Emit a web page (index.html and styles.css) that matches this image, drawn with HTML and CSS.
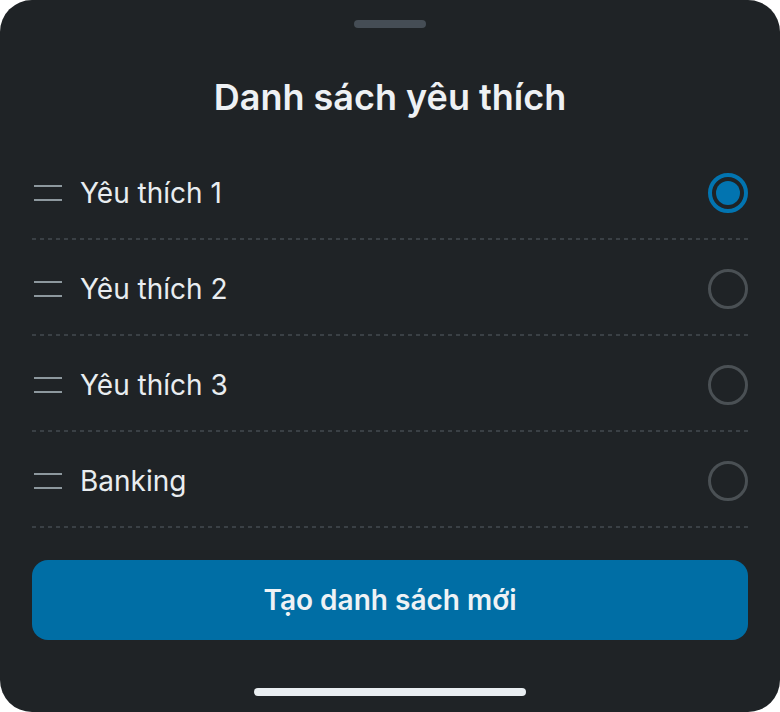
FILE: index.html
```
<!DOCTYPE html>
<html lang="vi">
<head>
<meta charset="utf-8">
<link rel="stylesheet" href="styles.css">
</head>
<body>
<div class="sheet">
  <div class="grabber"></div>
  <h1 class="title">Danh sách yêu thích</h1>
  <ul class="list">
    <li class="row">
      <span class="handle"></span>
      <span class="label">Yêu thích 1</span>
      <span class="radio checked"></span>
    </li>
    <li class="row">
      <span class="handle"></span>
      <span class="label">Yêu thích 2</span>
      <span class="radio"></span>
    </li>
    <li class="row">
      <span class="handle"></span>
      <span class="label">Yêu thích 3</span>
      <span class="radio"></span>
    </li>
    <li class="row">
      <span class="handle"></span>
      <span class="label">Banking</span>
      <span class="radio"></span>
    </li>
  </ul>
  <button class="primary">Tạo danh sách mới</button>
  <div class="home"></div>
</div>
</body>
</html>
```
FILE: styles.css
```
* { box-sizing: border-box; }
html, body { margin: 0; padding: 0; background: #ffffff; }
body { font-family: Inter, "Noto Sans", sans-serif; }
.sheet {
  width: 780px;
  height: 712px;
  background: #1f2326;
  border-radius: 32px;
  padding: 20px 32px 0;
  display: flex;
  flex-direction: column;
  align-items: stretch;
}
.grabber {
  align-self: center;
  width: 72px;
  height: 8px;
  border-radius: 4px;
  background: #454d55;
}
.title {
  margin: 47px 0 0;
  height: 44px;
  line-height: 44px;
  text-align: center;
  color: #eef1f4;
  font-size: 36px;
  font-weight: 600;
  letter-spacing: 0;
}
.list {
  list-style: none;
  margin: 25px 0 0;
  padding: 0;
}
.row {
  height: 96px;
  display: flex;
  align-items: center;
  padding-top: 2px;
  background-image: linear-gradient(to right, #3a4045 50%, transparent 50%);
  background-size: 8px 2px;
  background-repeat: repeat-x;
  background-position: left bottom;
}
.handle {
  width: 28px;
  height: 16px;
  border-top: 2px solid #8d989e;
  border-bottom: 2px solid #8d989e;
  margin: 0 18px 0 2px;
  flex: none;
}
.label {
  flex: 1;
  color: #e9edf0;
  font-size: 28px;
  font-weight: 400;
}
.radio {
  width: 40px;
  height: 40px;
  border-radius: 50%;
  border: 3px solid #4a5054;
  flex: none;
  display: flex;
  align-items: center;
  justify-content: center;
}
.radio.checked { border: 4px solid #0274b0; }
.radio.checked::after {
  content: "";
  width: 24px;
  height: 24px;
  border-radius: 50%;
  background: #0274b0;
}
.primary {
  margin-top: 32px;
  height: 80px;
  border: 0;
  border-radius: 16px;
  background: #006ea5;
  color: #eef2f5;
  font-family: Inter, "Noto Sans", sans-serif;
  font-size: 28px;
  font-weight: 600;
}
.home {
  align-self: center;
  margin-top: 48px;
  width: 272px;
  height: 8px;
  border-radius: 4px;
  background: #e9eef1;
}
```
